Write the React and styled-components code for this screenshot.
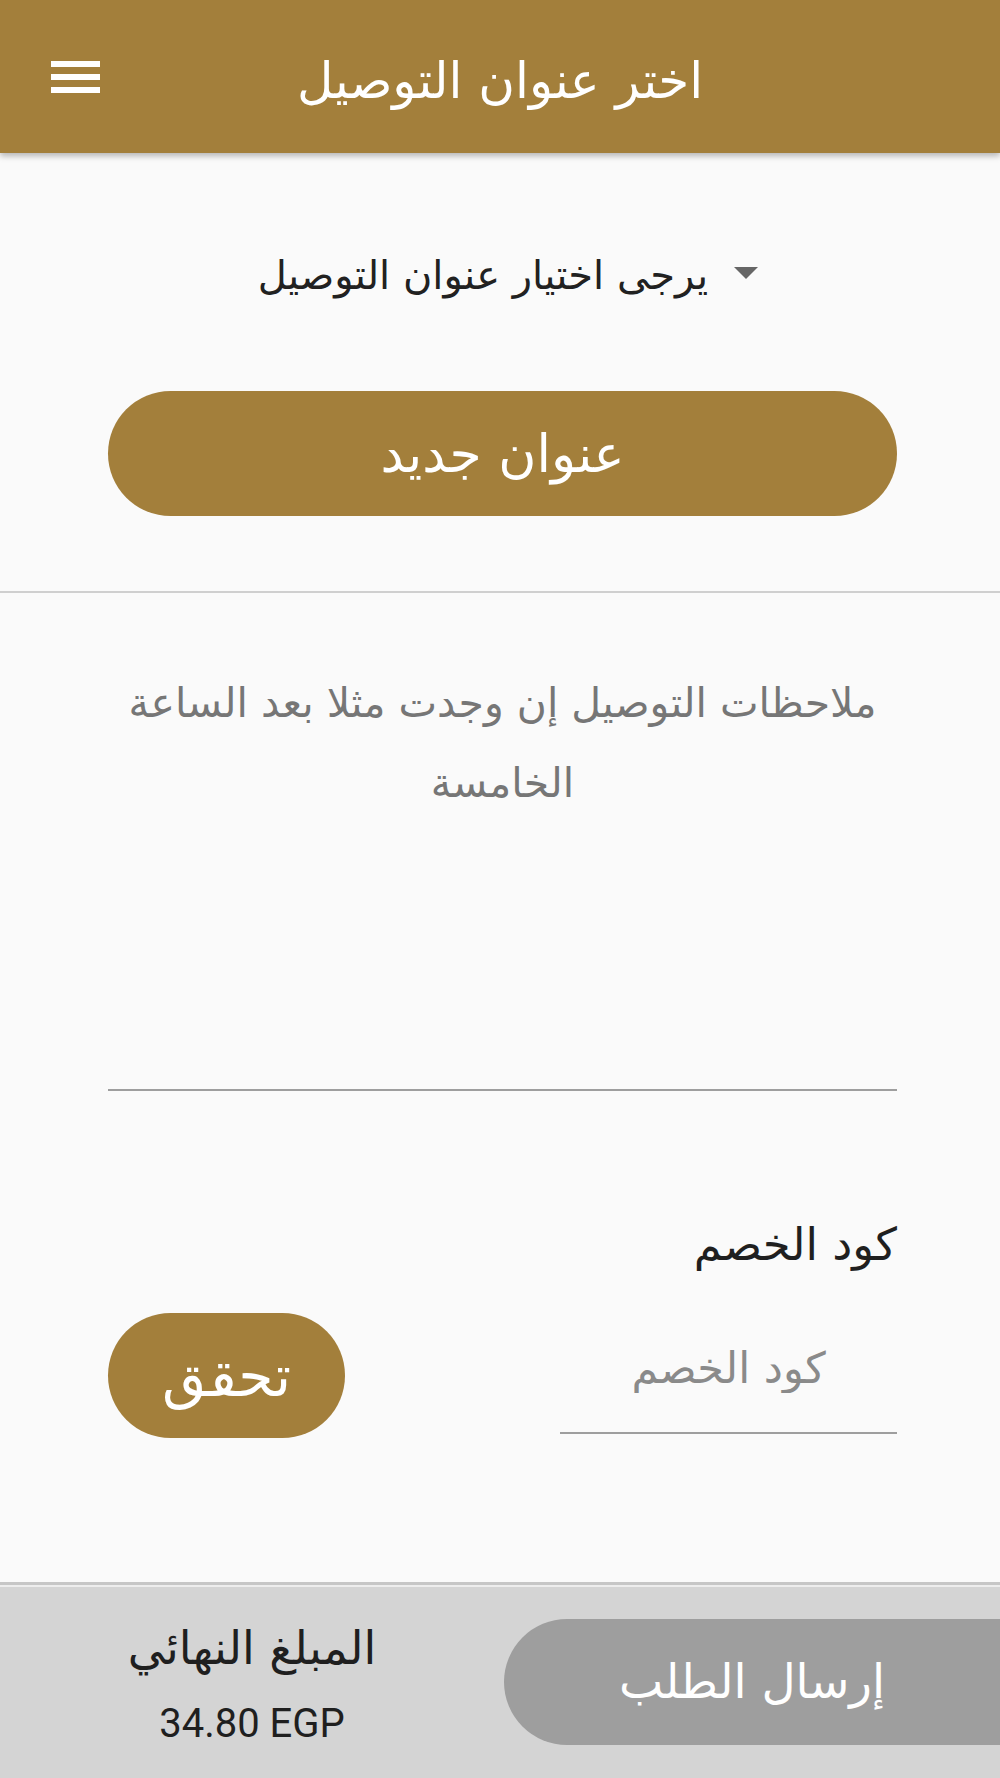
import React from 'react';
import styled, { createGlobalStyle } from 'styled-components';

const GlobalStyle = createGlobalStyle`
  html, body {
    margin: 0;
    padding: 0;
    background: #fafafa;
  }
  body {
    font-family: "DejaVu Sans", "Noto Sans", sans-serif;
  }
  * {
    box-sizing: border-box;
  }
`;

const gold = '#a37f3b';
const arabic = '"DejaVu Sans", "Noto Sans", sans-serif';

const Page = styled.div`
  direction: rtl;
  min-height: 100vh;
  display: flex;
  flex-direction: column;
  background: #fafafa;
`;

const Toolbar = styled.header`
  direction: ltr;
  height: 153px;
  background: ${gold};
  box-shadow: 0 3px 6px rgba(0, 0, 0, 0.28);
  display: grid;
  grid-template-columns: 49px 1fr 49px;
  align-items: center;
  padding: 0 51px;
  position: relative;
  z-index: 2;
`;

const MenuButton = styled.button`
  width: 49px;
  height: 32px;
  padding: 0;
  border: none;
  background: transparent;
  display: flex;
  flex-direction: column;
  justify-content: space-between;
  cursor: pointer;

  span {
    display: block;
    height: 6px;
    background: #fff;
  }
`;

const Title = styled.h1`
  margin: 8px 0 0;
  text-align: center;
  color: #fff;
  font-family: ${arabic};
  font-weight: normal;
  font-size: 50px;
  line-height: 70px;
  direction: rtl;
`;

const Content = styled.main`
  display: flex;
  flex-direction: column;
`;

// caret sits to the right of the text, so it comes first in rtl flow
const Dropdown = styled.div`
  margin-top: 92px;
  margin-bottom: 4px;
  padding-left: 16px;
  height: 60px;
  display: flex;
  justify-content: center;
  align-items: center;
  gap: 26px;
  font-family: ${arabic};
  font-size: 40px;
  color: #212121;
`;

const Caret = styled.span`
  width: 0;
  height: 0;
  margin-top: -4px;
  border-left: 12px solid transparent;
  border-right: 12px solid transparent;
  border-top: 12px solid #666;
`;

const PillButton = styled.button`
  height: 125px;
  border: none;
  border-radius: 63px;
  background: ${({ $muted }) => ($muted ? '#9e9e9e' : gold)};
  color: #fff;
  font-family: ${arabic};
  font-size: ${({ $size }) => $size || 42}px;
  cursor: pointer;
  padding: 0;
`;

const WideButton = styled(PillButton)`
  margin: 82px 103px 0 108px;
`;

const Divider = styled.hr`
  margin: 75px 0 0;
  border: none;
  height: 2px;
  background: #cfcfcf;
`;

const Notes = styled.textarea`
  margin: 70px 103px 0 108px;
  height: 428px;
  padding: 0;
  border: none;
  border-bottom: 2px solid #9e9e9e;
  background: transparent;
  resize: none;
  text-align: center;
  font-family: ${arabic};
  font-size: 41px;
  line-height: 80px;
  color: #333;
  outline: none;

  &::placeholder {
    color: #767676;
  }
`;

const Label = styled.div`
  margin: 124px 103px 6px 108px;
  height: 60px;
  line-height: 60px;
  font-family: ${arabic};
  font-size: 45px;
  color: #1f1f1f;
`;

const CouponRow = styled.div`
  margin: 32px 103px 0 108px;
  display: flex;
  justify-content: space-between;
  align-items: flex-start;
`;

const CouponInput = styled.input`
  width: 337px;
  height: 121px;
  padding: 0 0 9px;
  border: none;
  border-bottom: 2px solid #9e9e9e;
  background: transparent;
  text-align: center;
  font-family: ${arabic};
  font-size: 43px;
  color: #333;
  outline: none;

  &::placeholder {
    color: #8a8a8a;
  }
`;

const CheckButton = styled(PillButton)`
  width: 237px;
`;

const Footer = styled.footer`
  margin-top: auto;
  height: 196px;
  border-top: 3px solid #c6c6c6;
  box-shadow: inset 0 2px 0 #ededed;
  background: #d4d4d4;
  display: flex;
  align-items: center;
`;

const SubmitButton = styled(PillButton)`
  width: 496px;
  height: 126px;
  border-radius: 63px 0 0 63px;
`;

const Total = styled.div`
  flex: 1;
  text-align: center;
  margin-top: 4px;
`;

const TotalLabel = styled.div`
  font-family: ${arabic};
  font-size: 46px;
  line-height: 60px;
  color: #1f1f1f;
`;

const TotalAmount = styled.div`
  margin-top: 21px;
  font-family: Roboto, "DejaVu Sans", sans-serif;
  font-size: 40px;
  line-height: 50px;
  color: #1f1f1f;
  direction: ltr;
`;

export default function App() {
  return (
    <>
      <GlobalStyle />
      <Page>
        <Toolbar>
          <MenuButton aria-label="menu">
            <span />
            <span />
            <span />
          </MenuButton>
          <Title>اختر عنوان التوصيل</Title>
          <div />
        </Toolbar>

        <Content>
          <Dropdown>
            <Caret />
            <span>يرجى اختيار عنوان التوصيل</span>
          </Dropdown>

          <WideButton $size={52}>عنوان جديد</WideButton>

          <Divider />

          <Notes placeholder={'ملاحظات التوصيل إن وجدت مثلا بعد الساعة\nالخامسة'} />

          <Label>كود الخصم</Label>

          <CouponRow>
            <CouponInput placeholder="كود الخصم" />
            <CheckButton $size={57}>تحقق</CheckButton>
          </CouponRow>
        </Content>

        <Footer>
          <SubmitButton $muted $size={47}>إرسال الطلب</SubmitButton>
          <Total>
            <TotalLabel>المبلغ النهائي</TotalLabel>
            <TotalAmount>34.80 EGP</TotalAmount>
          </Total>
        </Footer>
      </Page>
    </>
  );
}
